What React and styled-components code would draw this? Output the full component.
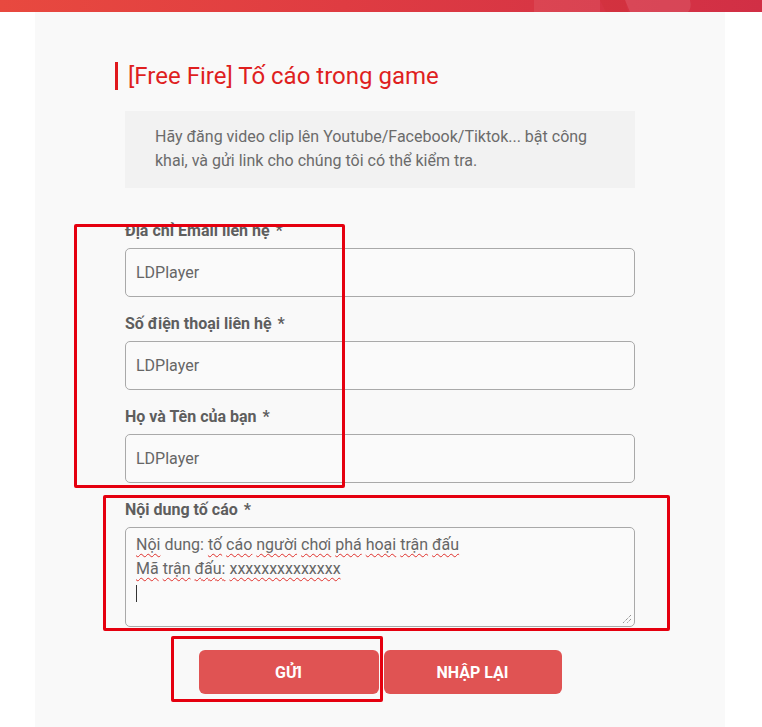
import React from "react";
import styled, { createGlobalStyle } from "styled-components";

const Global = createGlobalStyle`
  html, body { margin: 0; padding: 0; background: #ffffff; }
  body { font-family: Roboto, "Noto Sans", "Liberation Sans", sans-serif; }
  * { box-sizing: border-box; }
`;

const Page = styled.div`
  position: relative;
  width: 762px;
  height: 727px;
  overflow: hidden;
  background: #ffffff;
`;

const TopBar = styled.div`
  position: relative;
  height: 12px;
  background: linear-gradient(90deg, #e8493f 0%, #df3c42 45%, #d83644 70%, #d12f45 100%);
  overflow: hidden;
`;

const BarDeco = styled.svg`
  position: absolute;
  left: 0;
  top: 0;
`;

const Panel = styled.main`
  margin: 0 37px 0 35px;
  min-height: 715px;
  background: #f9f9f9;
  padding: 50px 90px 40px 90px;
  display: flex;
  flex-direction: column;
`;

const Title = styled.h1`
  margin: 0 0 0 -10px;
  padding-left: 10px;
  border-left: 3px solid #e0191d;
  font-family: Roboto, "Noto Sans", sans-serif;
  font-weight: 400;
  font-size: 24px;
  line-height: 28px;
  color: #df1f1f;
`;

const Notice = styled.div`
  margin-top: 21px;
  background: #f2f2f2;
  padding: 14px 30px 15px 30px;
  font-size: 16px;
  line-height: 24px;
  color: #6b6b6b;
`;

const Form = styled.form`
  margin-top: 33px;
  display: flex;
  flex-direction: column;
  gap: 17px;
`;

const Field = styled.div`
  display: flex;
  flex-direction: column;
`;

const Label = styled.label`
  font-size: 16px;
  line-height: 20px;
  font-weight: 700;
  color: #5e5e5e;
  margin-bottom: 7px;
`;

const Star = styled.span`
  margin-left: 6px;
  font-weight: 700;
`;

const Input = styled.div`
  height: 49px;
  border: 1px solid #a9a9a9;
  border-radius: 5px;
  background: #fafafa;
  padding: 0 10px;
  display: flex;
  align-items: center;
  font-size: 16px;
  color: #666666;
`;

const TextArea = styled.div`
  position: relative;
  height: 100px;
  border: 1px solid #a9a9a9;
  border-radius: 5px;
  background: #fafafa;
  padding: 5px 10px;
  font-size: 16px;
  line-height: 24px;
  color: #666666;
`;

const Line = styled.div`
  height: 24px;
  white-space: nowrap;
`;

const Typo = styled.span`
  text-decoration: underline wavy #e0302b;
  text-decoration-thickness: 1px;
  text-underline-offset: 3px;
`;

const Caret = styled.span`
  display: inline-block;
  width: 1px;
  height: 17px;
  margin-top: 4px;
  background: #333;
`;

const Grip = styled.svg`
  position: absolute;
  right: 2px;
  bottom: 2px;
`;

const Buttons = styled.div`
  margin-top: 23px;
  display: flex;
  justify-content: center;
  gap: 5px;
`;

const Button = styled.button`
  width: ${(p) => p.$w}px;
  height: 44px;
  border: none;
  border-radius: 6px;
  background: #e05353;
  color: #ffffff;
  font-family: Roboto, "Noto Sans", sans-serif;
  font-weight: 700;
  font-size: 16px;
  cursor: pointer;
`;

const Mark = styled.div`
  position: absolute;
  border: 3px solid #e5000f;
  border-radius: 2px;
  pointer-events: none;
`;

const words = (text) =>
  text.split(" ").map((w, i, arr) => (
    <React.Fragment key={i}>
      {w.startsWith("!") ? w.slice(1) : <Typo>{w}</Typo>}
      {i < arr.length - 1 ? " " : ""}
    </React.Fragment>
  ));

export default function App() {
  const fields = [
    "Địa chỉ Email liên hệ",
    "Số điện thoại liên hệ",
    "Họ và Tên của bạn",
  ];
  return (
    <Page>
      <Global />
      <TopBar>
        <BarDeco width="762" height="12" viewBox="0 0 762 12">
          <rect x="534" y="0" width="66" height="12" fill="#ffffff" opacity="0.08" />
          <polygon points="600,0 625,0 628,12 606,12" fill="#cf2f3a" opacity="0.5" />
          <path d="M625 0 L690 0 Q692 8 688 12 L630 12 Z" fill="#ffffff" opacity="0.1" />
        </BarDeco>
      </TopBar>
      <Panel>
        <Title>[Free Fire] Tố cáo trong game</Title>
        <Notice>
          Hãy đăng video clip lên Youtube/Facebook/Tiktok... bật công khai, và gửi link cho chúng tôi có thể kiểm tra.
        </Notice>
        <Form onSubmit={(e) => e.preventDefault()}>
          {fields.map((f) => (
            <Field key={f}>
              <Label>
                {f}
                <Star>*</Star>
              </Label>
              <Input>LDPlayer</Input>
            </Field>
          ))}
          <Field>
            <Label>
              Nội dung tố cáo
              <Star>*</Star>
            </Label>
            <TextArea>
              <Line>{words("Nội !dung: tố cáo người chơi phá hoại trận đấu")}</Line>
              <Line>{words("Mã trận đấu: xxxxxxxxxxxxxx")}</Line>
              <Line>
                <Caret />
              </Line>
              <Grip width="10" height="10" viewBox="0 0 10 10">
                <line x1="9" y1="1" x2="1" y2="9" stroke="#6d6d6d" strokeWidth="1" strokeDasharray="1 1" />
                <line x1="9" y1="5" x2="5" y2="9" stroke="#6d6d6d" strokeWidth="1" strokeDasharray="1 1" />
              </Grip>
            </TextArea>
          </Field>
        </Form>
        <Buttons>
          <Button $w={180}>GỬI</Button>
          <Button $w={178}>NHẬP LẠI</Button>
        </Buttons>
      </Panel>
      <Mark style={{ left: 74, top: 224, width: 271, height: 264 }} />
      <Mark style={{ left: 103, top: 495, width: 567, height: 136 }} />
      <Mark style={{ left: 171, top: 636, width: 212, height: 66 }} />
    </Page>
  );
}
